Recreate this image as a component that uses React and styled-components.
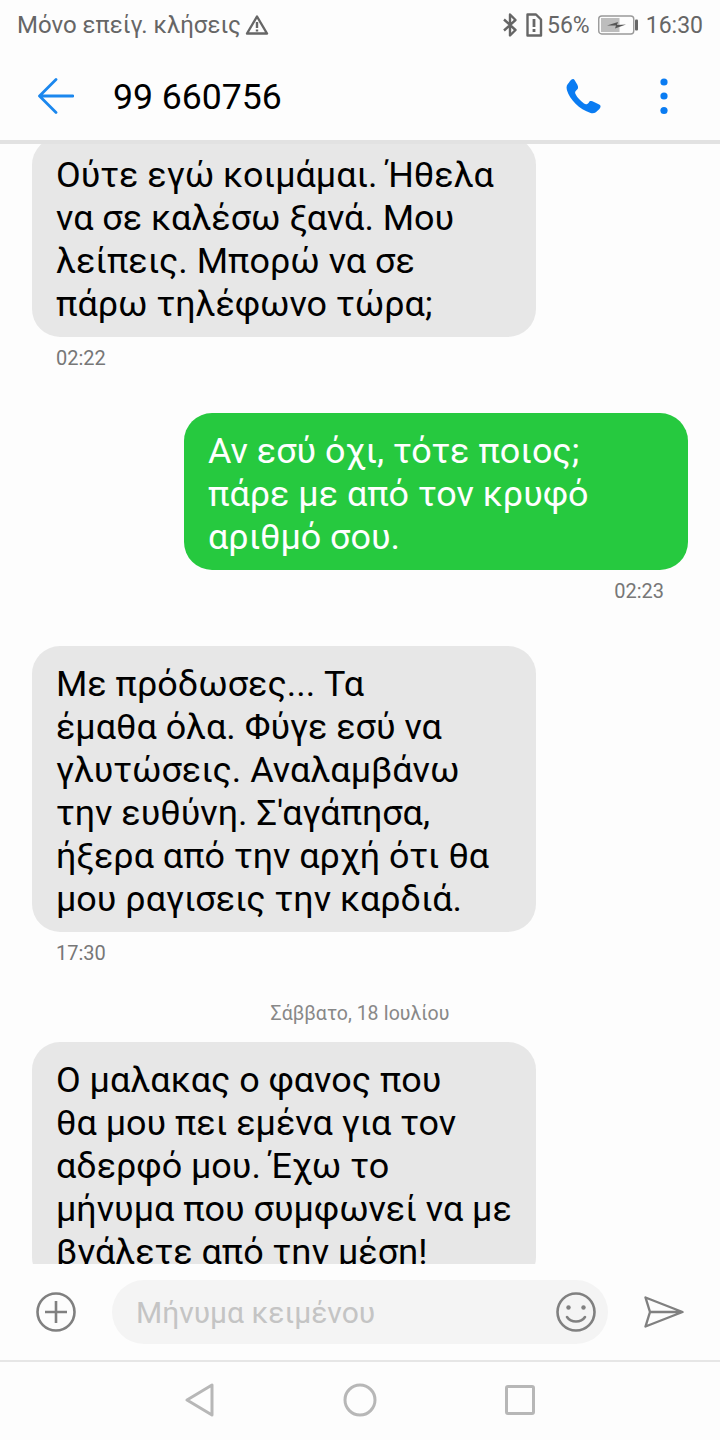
import React from "react";
import styled, { createGlobalStyle } from "styled-components";

const Global = createGlobalStyle`
  html, body { margin: 0; padding: 0; background: #fdfdfd; }
  body { font-family: Roboto, "Noto Sans", sans-serif; }
`;

const Screen = styled.div`
  width: 720px;
  height: 1440px;
  display: flex;
  flex-direction: column;
  background: #fdfdfd;
  overflow: hidden;
`;

const StatusBar = styled.div`
  height: 50px;
  flex: none;
  display: flex;
  align-items: center;
  justify-content: space-between;
  padding: 0 17px 0 17px;
  color: #666;
  font-size: 24px;
`;
const StatusGroup = styled.div`
  display: flex;
  align-items: center;
  font-size: ${(p) => p.$size || 24}px;
`;
const StatusText = styled.span`
  margin-left: ${(p) => p.$ml || 0}px;
`;

const Header = styled.div`
  height: 90px;
  flex: none;
  display: flex;
  align-items: center;
  padding: 0 0 0 38px;
  border-bottom: 4px solid #e2e2e2;
`;
const Title = styled.div`
  margin-left: 39px;
  font-size: 35.6px;
  color: #000;
  flex: 1;
  padding-top: 4px;
`;
const HeaderIcon = styled.svg`
  flex: none;
  display: block;
`;

const Thread = styled.div`
  flex: 1;
  min-height: 0;
  overflow: hidden;
`;
const ThreadInner = styled.div`
  display: flex;
  flex-direction: column;
  margin-top: -7px;
  padding: 0 32px;
`;
const Bubble = styled.div`
  width: 504px;
  box-sizing: border-box;
  flex: none;
  padding: 17px 24px 11px;
  border-radius: 28px;
  font-size: 35.9px;
  line-height: 43px;
  white-space: nowrap;
  color: ${(p) => (p.$out ? "#fff" : "#000")};
  background: ${(p) => (p.$out ? "#26c93f" : "#e7e7e7")};
  align-self: ${(p) => (p.$out ? "flex-end" : "flex-start")};
  margin-top: ${(p) => p.$mt || 0}px;
`;
const Time = styled.div`
  font-size: 20px;
  line-height: 22px;
  color: #777;
  margin-top: 10px;
  padding: 0 24px;
  text-align: ${(p) => (p.$out ? "right" : "left")};
`;
const DateLabel = styled.div`
  font-size: 19.5px;
  line-height: 22px;
  color: #888;
  text-align: center;
  margin-top: 39px;
`;

const Composer = styled.div`
  height: 98px;
  flex: none;
  display: flex;
  align-items: center;
  padding: 0 36px 0 36px;
  border-bottom: 2px solid #e6e6e6;
  box-sizing: border-box;
`;
const InputPill = styled.div`
  width: 496px;
  height: 64px;
  margin-left: 36px;
  margin-right: 36px;
  flex: none;
  box-sizing: border-box;
  border-radius: 32px;
  background: #f4f4f4;
  display: flex;
  align-items: center;
  justify-content: space-between;
  padding: 0 12px 0 24px;
  font-size: 30px;
  color: #c4c4c4;
`;

const NavBar = styled.div`
  flex: none;
  height: 78px;
  box-sizing: border-box;
  padding-bottom: 2px;
  display: flex;
  align-items: center;
  justify-content: center;
  gap: 128px;
`;

const Warn = () => (
  <svg width="24" height="22" viewBox="0 0 24 22" style={{ marginLeft: 4 }}>
    <path d="M12 2.5 L22 19.5 H2 Z" fill="none" stroke="#666" strokeWidth="2.4" strokeLinejoin="round" />
    <path d="M12 8v6M12 15.5v2" stroke="#666" strokeWidth="2.4" />
  </svg>
);
const Bluetooth = () => (
  <svg width="16" height="24" viewBox="0 0 16 24">
    <path d="M2 6.5 L13.5 17 L8 22.5 V1.5 L13.5 7 L2 17.5" fill="none" stroke="#666" strokeWidth="2.4" strokeLinejoin="round" />
  </svg>
);
const Sim = () => (
  <svg width="18" height="24" viewBox="0 0 18 24" style={{ marginLeft: 7 }}>
    <path d="M2.5 1.5 H11 L16 6.5 V22.5 H2.5 Z" fill="none" stroke="#666" strokeWidth="2.4" strokeLinejoin="round" />
    <path d="M9 6v8M9 16v3" stroke="#666" strokeWidth="2.8" />
  </svg>
);
const Battery = () => (
  <svg width="41" height="20" viewBox="0 0 41 20" style={{ marginLeft: 8 }}>
    <rect x="0.75" y="1" width="35" height="18" rx="3" fill="none" stroke="#999" strokeWidth="1.4" />
    <rect x="3" y="3" width="18.5" height="14" fill="#bdbdbd" />
    <rect x="37" y="4.5" width="3" height="11" rx="1" fill="#666" />
    <path d="M9 10.5 L20 7 L19 10 L28 9.5 L17 13.5 L18 10.5 Z" fill="#555" />
  </svg>
);

export default function App() {
  return (
    <Screen>
      <Global />
      <StatusBar>
        <StatusGroup>
          <span>Μόνο επείγ. κλήσεις</span>
          <Warn />
        </StatusGroup>
        <StatusGroup $size={23}>
          <Bluetooth />
          <Sim />
          <StatusText $ml={4}>56%</StatusText>
          <Battery />
          <StatusText $ml={7}>16:30</StatusText>
        </StatusGroup>
      </StatusBar>

      <Header>
        <HeaderIcon width="36" height="36" viewBox="0 0 36 36" style={{ marginTop: 2 }}>
          <path d="M35 18 H2 M18 1.5 L1.5 18 L18 34.5" fill="none" stroke="#1b87ee" strokeWidth="2.8" strokeLinecap="round" strokeLinejoin="round" />
        </HeaderIcon>
        <Title>99 660756</Title>
        <HeaderIcon width="36" height="36" viewBox="0 0 38 38" style={{ marginRight: 56, marginTop: 2 }}>
          <path d="M3 5 C1 7 0 9 1 13 C4 23 14 33 26 37 C30 38 32 36 35 33 C37 31 37 29 35 28 L29 25 C27 24 25 24 24 26 C22 28 21 28 19 27 C15 24 12 21 10 17 C9 15 10 14 12 12 C13 11 13 9 12 7 L9 2 C8 0 5 1 3 5 Z" fill="#0a7cf2" />
        </HeaderIcon>
        <HeaderIcon width="12" height="38" viewBox="0 0 12 38" style={{ marginRight: 50, marginTop: 2 }}>
          <circle cx="6" cy="5" r="3.6" fill="#0a7cf2" />
          <circle cx="6" cy="19" r="3.6" fill="#0a7cf2" />
          <circle cx="6" cy="33.5" r="3.6" fill="#0a7cf2" />
        </HeaderIcon>
      </Header>

      <Thread>
        <ThreadInner>
          <Bubble>
            Ούτε εγώ κοιμάμαι. Ήθελα<br />να σε καλέσω ξανά. Μου<br />λείπεις. Μπορώ να σε<br />πάρω τηλέφωνο τώρα;
          </Bubble>
          <Time>02:22</Time>
          <Bubble $out $mt={44}>
            Αν εσύ όχι, τότε ποιος;<br />πάρε με από τον κρυφό<br />αριθμό σου.
          </Bubble>
          <Time $out>02:23</Time>
          <Bubble $mt={44}>
            Με πρόδωσες... Τα<br />έμαθα όλα. Φύγε εσύ να<br />γλυτώσεις. Αναλαμβάνω<br />την ευθύνη. Σ'αγάπησα,<br />ήξερα από την αρχή ότι θα<br />μου ραγισεις την καρδιά.
          </Bubble>
          <Time>17:30</Time>
          <DateLabel>Σάββατο, 18 Ιουλίου</DateLabel>
          <Bubble $mt={17}>
            Ο μαλακας ο φανος που<br />θα μου πει εμένα για τον<br />αδερφό μου. Έχω το<br />μήνυμα που συμφωνεί να με<br />βγάλετε από την μέση!
          </Bubble>
        </ThreadInner>
      </Thread>

      <Composer>
        <HeaderIcon width="40" height="40" viewBox="0 0 40 40">
          <circle cx="20" cy="20" r="18.5" fill="none" stroke="#808080" strokeWidth="2.6" />
          <path d="M20 9v22M9 20h22" stroke="#808080" strokeWidth="2.6" />
        </HeaderIcon>
        <InputPill>
          <span>Μήνυμα κειμένου</span>
          <HeaderIcon width="40" height="40" viewBox="0 0 40 40">
            <circle cx="20" cy="20" r="18.5" fill="none" stroke="#808080" strokeWidth="2.6" />
            <circle cx="12.5" cy="15.5" r="2.2" fill="#808080" />
            <circle cx="27.5" cy="15.5" r="2.2" fill="#808080" />
            <path d="M11 25 C15 31 25 31 29 25" fill="none" stroke="#808080" strokeWidth="2.6" strokeLinecap="round" />
          </HeaderIcon>
        </InputPill>
        <HeaderIcon width="40" height="32" viewBox="0 0 40 32">
          <path d="M1.5 1.5 L38.5 16 L1.5 30.5 L6 16 Z M6 16 H38" fill="none" stroke="#808080" strokeWidth="2.4" strokeLinejoin="round" />
        </HeaderIcon>
      </Composer>

      <NavBar>
        <svg width="30" height="34" viewBox="0 0 30 34">
          <path d="M27 2 V32 L2 17 Z" fill="none" stroke="#b7b7b7" strokeWidth="3" strokeLinejoin="round" />
        </svg>
        <svg width="34" height="34" viewBox="0 0 34 34">
          <circle cx="17" cy="17" r="15" fill="none" stroke="#b7b7b7" strokeWidth="3" />
        </svg>
        <svg width="30" height="30" viewBox="0 0 30 30">
          <rect x="1.5" y="1.5" width="27" height="27" rx="1.5" fill="none" stroke="#b7b7b7" strokeWidth="3" />
        </svg>
      </NavBar>
    </Screen>
  );
}
